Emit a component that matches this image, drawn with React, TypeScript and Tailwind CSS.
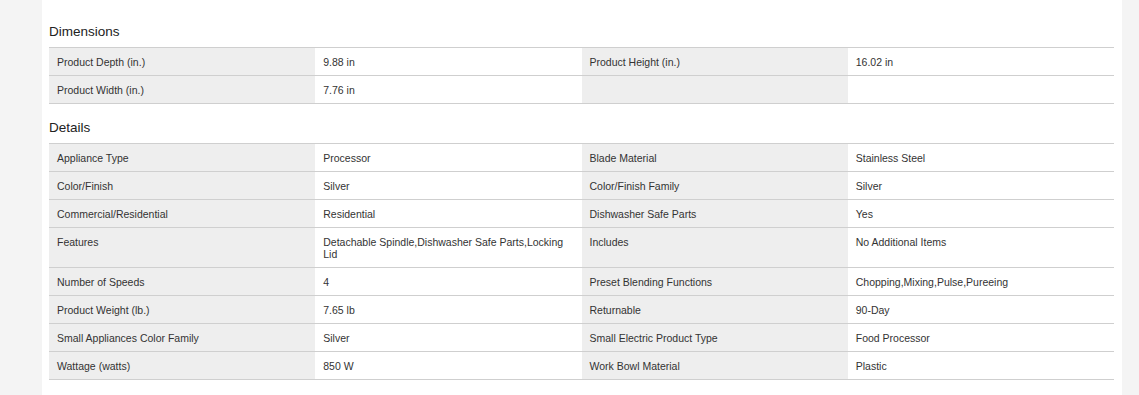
import React from 'react';

type Spec = [string, string];

const dimensions: Spec[] = [
  ['Product Depth (in.)', '9.88 in'],
  ['Product Height (in.)', '16.02 in'],
  ['Product Width (in.)', '7.76 in'],
];

const details: Spec[] = [
  ['Appliance Type', 'Processor'],
  ['Blade Material', 'Stainless Steel'],
  ['Color/Finish', 'Silver'],
  ['Color/Finish Family', 'Silver'],
  ['Commercial/Residential', 'Residential'],
  ['Dishwasher Safe Parts', 'Yes'],
  ['Features', 'Detachable Spindle,Dishwasher Safe Parts,Locking Lid'],
  ['Includes', 'No Additional Items'],
  ['Number of Speeds', '4'],
  ['Preset Blending Functions', 'Chopping,Mixing,Pulse,Pureeing'],
  ['Product Weight (lb.)', '7.65 lb'],
  ['Returnable', '90-Day'],
  ['Small Appliances Color Family', 'Silver'],
  ['Small Electric Product Type', 'Food Processor'],
  ['Wattage (watts)', '850 W'],
  ['Work Bowl Material', 'Plastic'],
];

const SpecTable: React.FC<{ title: string; items: Spec[] }> = ({ title, items }) => {
  const cells = items.length % 2 === 1 ? [...items, ['', ''] as Spec] : items;
  return (
    <div>
      <h3 className="text-[13.5px] leading-[20px] text-[#222] mb-[5px]">{title}</h3>
      <div className="grid grid-cols-4 border-t border-[#cfcfcf]">
        {cells.map(([label, value], i) => (
          <React.Fragment key={i}>
            <div className="bg-[#eeeeee] px-2 pt-2 pb-[7px] border-b border-[#cfcfcf] text-[10.5px] leading-[12px] text-[#333]">
              {label}
            </div>
            <div className="bg-white px-2 pt-2 pb-[7px] border-b border-[#cfcfcf] text-[10.5px] leading-[12px] text-[#333]">
              {value}
            </div>
          </React.Fragment>
        ))}
      </div>
    </div>
  );
};

export default function App() {
  return (
    <div className="min-h-[395px] bg-[#f4f4f4] pl-[42px] pr-[17px]" style={{ fontFamily: '"Liberation Sans", Arial, sans-serif' }}>
      <div className="bg-white min-h-[395px] px-[7px] pt-[22px] pr-[8px]">
        <SpecTable title="Dimensions" items={dimensions} />
        <div className="mt-[14px]">
          <SpecTable title="Details" items={details} />
        </div>
      </div>
    </div>
  );
}
